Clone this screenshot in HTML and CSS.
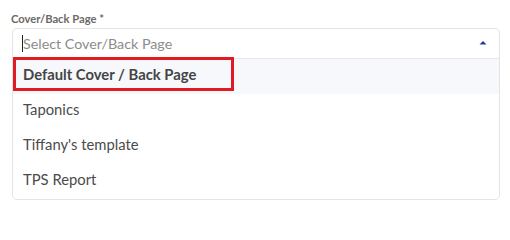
FILE: index.html
```html
<!DOCTYPE html>
<html>
<head>
<meta charset="utf-8">
<link rel="stylesheet" href="styles.css">
</head>
<body>
<div class="field">
  <div class="label">Cover/Back Page *</div>
  <div class="select">
    <div class="control">
      <span class="caret"></span>
      <span class="placeholder">Select Cover/Back Page</span>
      <svg class="arrow" width="8" height="5" viewBox="0 0 8 5"><path d="M0.5 4.5 L4 1 L7.5 4.5 Z" fill="#1b3f93"/></svg>
    </div>
    <div class="menu">
      <div class="option selected">Default Cover / Back Page<span class="mark"></span></div>
      <div class="option">Taponics</div>
      <div class="option">Tiffany's template</div>
      <div class="option">TPS Report</div>
    </div>
  </div>
</div>
</body>
</html>
```
FILE: styles.css
```css
html, body {
  margin: 0;
  padding: 0;
  background: #ffffff;
}
body {
  font-family: Lato, "Open Sans", sans-serif;
}
.field {
  padding: 12px 10px 0 12px;
}
.label {
  font-size: 11.2px;
  font-weight: 700;
  line-height: 14px;
  color: #6d6a66;
  margin-left: -1px;
  margin-bottom: 2px;
}
.select {
  border: 1px solid #e4e4e4;
  border-radius: 5px;
  box-sizing: border-box;
  width: 488px;
}
.control {
  height: 30px;
  display: flex;
  align-items: center;
  padding-left: 9px;
  padding-right: 12px;
  border-bottom: 1px solid #e8e8ea;
  box-sizing: border-box;
}
.caret {
  width: 1px;
  height: 17px;
  background: #222;
}
.placeholder {
  font-size: 14.3px;
  color: #8c8c8c;
  flex: 1;
}
.arrow {
  display: block;
  margin-bottom: 2px;
}
.menu {
  display: flex;
  flex-direction: column;
}
.option {
  height: 35px;
  line-height: 31px;
  padding: 0 10px;
  box-sizing: border-box;
  font-size: 14.8px;
  color: #4b4b4b;
}
.option.selected {
  position: relative;
  background: #f7f8fc;
  font-weight: 700;
  color: #454545;
}
.mark {
  position: absolute;
  left: 0;
  top: -2px;
  width: 221px;
  height: 34px;
  border: 3px solid #e01b24;
  box-sizing: border-box;
}
```
